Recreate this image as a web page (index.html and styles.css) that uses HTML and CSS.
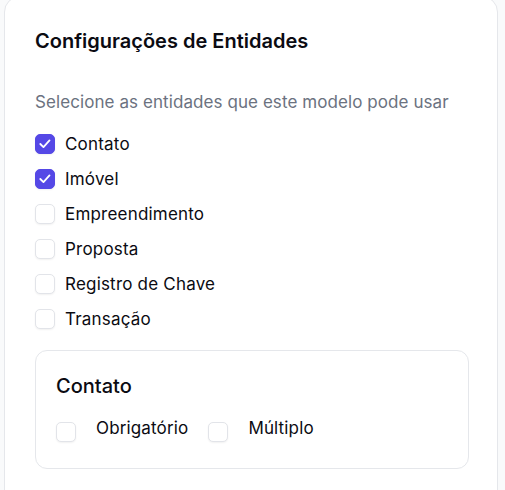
FILE: index.html
```html
<!DOCTYPE html>
<html lang="pt-BR">

<head>
    <meta charset="UTF-8">
    <meta name="viewport" content="width=device-width, initial-scale=1.0">
    <title>Configurações de Entidades</title>
    <link rel="stylesheet" href="styles.css">
</head>

<body>
    <div class="card">
        <h2 class="title">Configurações de Entidades</h2>
        <p class="subtitle">Selecione as entidades que este modelo pode usar</p>

        <ul class="entity-list">
            <li class="entity">
                <span class="box checked">
                    <svg viewBox="0 0 20 20" width="20" height="20"><path d="M4.8 10l3.5 3.4 6.7-7.4"></path></svg>
                </span>
                <span class="label">Contato</span>
            </li>
            <li class="entity">
                <span class="box checked">
                    <svg viewBox="0 0 20 20" width="20" height="20"><path d="M4.8 10l3.5 3.4 6.7-7.4"></path></svg>
                </span>
                <span class="label">Imóvel</span>
            </li>
            <li class="entity">
                <span class="box"></span>
                <span class="label">Empreendimento</span>
            </li>
            <li class="entity">
                <span class="box"></span>
                <span class="label">Proposta</span>
            </li>
            <li class="entity">
                <span class="box"></span>
                <span class="label">Registro de Chave</span>
            </li>
            <li class="entity">
                <span class="box"></span>
                <span class="label">Transação</span>
            </li>
        </ul>

        <div class="entity-card">
            <h3 class="entity-title">Contato</h3>
            <div class="options">
                <div class="option">
                    <span class="box"></span>
                    <span class="label">Obrigatório</span>
                </div>
                <div class="option">
                    <span class="box"></span>
                    <span class="label">Múltiplo</span>
                </div>
            </div>
        </div>
    </div>
</body>

</html>
```

FILE: styles.css
```css
* {
    margin: 0;
    padding: 0;
    box-sizing: border-box;
    font-family: 'Inter', sans-serif;
}

body {
    background: #f9fafb;
    color: #0b0b12;
    font-size: 17px;
    height: 490px;
    overflow: hidden;
}

.card {
    margin: -4px 0 0 4px;
    width: 494px;
    background: #fff;
    border: 1px solid #e5e7eb;
    border-radius: 16px;
    padding: 30px 28px 40px 30px;
}

.title {
    font-size: 20px;
    line-height: 28px;
    font-weight: 600;
}

.subtitle {
    margin-top: 35px;
    font-size: 17px;
    line-height: 24px;
    color: #6b7280;
    letter-spacing: 0.08px;
}

.entity-list {
    list-style: none;
    margin-top: 18px;
    display: flex;
    flex-direction: column;
    gap: 11px;
}

.entity {
    display: flex;
    align-items: center;
    gap: 10px;
    line-height: 24px;
    letter-spacing: 0.2px;
}

.box {
    width: 20px;
    height: 20px;
    flex-shrink: 0;
    border: 1px solid #e2e4e9;
    border-radius: 5px;
    background: #fff;
    box-shadow: 0 1px 2px rgba(0, 0, 0, 0.06);
    display: flex;
    align-items: center;
    justify-content: center;
}

.box.checked {
    background: #5548e6;
    border-color: #5548e6;
}

.box svg {
    fill: none;
    stroke: #fff;
    stroke-width: 2;
    stroke-linecap: round;
    stroke-linejoin: round;
}

.entity-card {
    margin-top: 19px;
    border: 1px solid #e5e7eb;
    border-radius: 12px;
    padding: 21px 20px 26px;
}

.entity-title {
    font-size: 20px;
    line-height: 28px;
    font-weight: 500;
}

.options {
    margin-top: 16px;
    display: flex;
    gap: 20px;
}

.option {
    display: flex;
    align-items: flex-start;
    gap: 20px;
    line-height: 24px;
    letter-spacing: 0.15px;
}

.option .box {
    margin-top: 6px;
}
```
